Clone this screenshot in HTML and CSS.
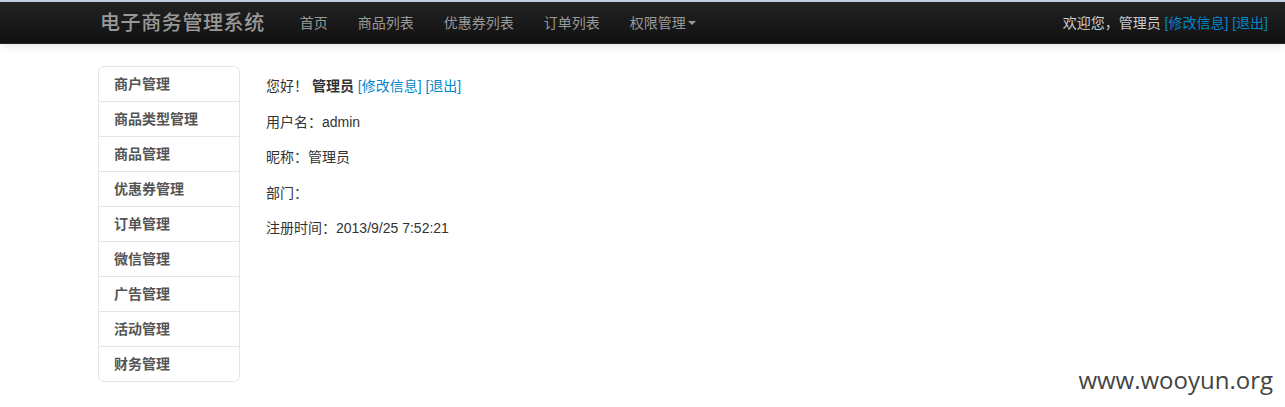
FILE: index.html
```html
<!DOCTYPE html>
<html lang="zh-CN">
<head>
<meta charset="utf-8">
<title>电子商务管理系统</title>
<link rel="stylesheet" href="styles.css">
</head>
<body>
<div class="topline"></div>
<header class="navbar">
  <div class="nav-left">
    <a class="brand" href="#">电子商务管理系统</a>
    <ul class="nav">
      <li><a href="#">首页</a></li>
      <li><a href="#">商品列表</a></li>
      <li><a href="#">优惠券列表</a></li>
      <li><a href="#">订单列表</a></li>
      <li><a href="#">权限管理<span class="caret"></span></a></li>
    </ul>
  </div>
  <p class="navbar-text">欢迎您，管理员 <a href="#">[修改信息]</a> <a href="#">[退出]</a></p>
</header>
<main class="page">
  <ul class="side">
    <li><a href="#">商户管理</a></li>
    <li><a href="#">商品类型管理</a></li>
    <li><a href="#">商品管理</a></li>
    <li><a href="#">优惠券管理</a></li>
    <li><a href="#">订单管理</a></li>
    <li><a href="#">微信管理</a></li>
    <li><a href="#">广告管理</a></li>
    <li><a href="#">活动管理</a></li>
    <li><a href="#">财务管理</a></li>
  </ul>
  <section class="content">
    <p>您好！ <b>管理员</b> <a href="#">[修改信息]</a> <a href="#">[退出]</a></p>
    <p>用户名：admin</p>
    <p>昵称：管理员</p>
    <p>部门：</p>
    <p>注册时间：2013/9/25 7:52:21</p>
  </section>
</main>
<div class="watermark">www.wooyun.org</div>
</body>
</html>
```

FILE: styles.css
```css
* { box-sizing: border-box; }
html, body { margin: 0; padding: 0; }
body {
  font-family: "Liberation Sans", "Noto Sans CJK SC", sans-serif;
  font-size: 14px;
  line-height: 20px;
  color: #333;
  background: #fff;
  width: 1285px;
  height: 407px;
  position: relative;
  overflow: hidden;
}
a { color: #0088cc; text-decoration: none; }
.topline { height: 2px; background: #c9d6e6; }
.navbar {
  height: 42px;
  background: linear-gradient(#222, #111);
  border-bottom: 1px solid #252525;
  box-shadow: 0 1px 10px rgba(0,0,0,0.12);
  display: flex;
  justify-content: space-between;
  align-items: center;
  padding: 0 17px 0 98px;
}
.nav-left { display: flex; align-items: center; }
.brand {
  font-size: 20px;
  letter-spacing: 0.6px;
  color: #999;
  padding: 10px 20px 10px 2px;
  font-weight: 500;
}
.nav { list-style: none; margin: 0; padding: 0; display: flex; }
.nav a {
  display: block;
  color: #999;
  padding: 10px 15px;
}
.caret {
  display: inline-block;
  width: 0; height: 0;
  border-left: 4px solid transparent;
  border-right: 4px solid transparent;
  border-top: 4px solid #999;
  vertical-align: middle;
  margin-left: 2px;
  margin-top: -2px;
}
.navbar-text { margin: 0; color: #ccc; }
.page {
  display: flex;
  align-items: flex-start;
  padding: 22px 0 0 98px;
}
.side {
  list-style: none;
  margin: 0;
  padding: 0;
  width: 142px;
  border: 1px solid #e5e5e5;
  border-radius: 6px;
}
.side li + li { border-top: 1px solid #e5e5e5; }
.side a {
  display: block;
  height: 34px;
  line-height: 34px;
  padding-left: 15px;
  color: #555;
  font-weight: bold;
}
.content { padding: 10px 0 0 26px; }
.content p { margin: 0 0 15.5px; }
.content b { font-weight: bold; }
.watermark {
  position: absolute;
  right: 12px;
  bottom: 14px;
  font-family: "Open Sans", sans-serif;
  font-size: 24px;
  line-height: 26px;
  color: #444;
}
```
